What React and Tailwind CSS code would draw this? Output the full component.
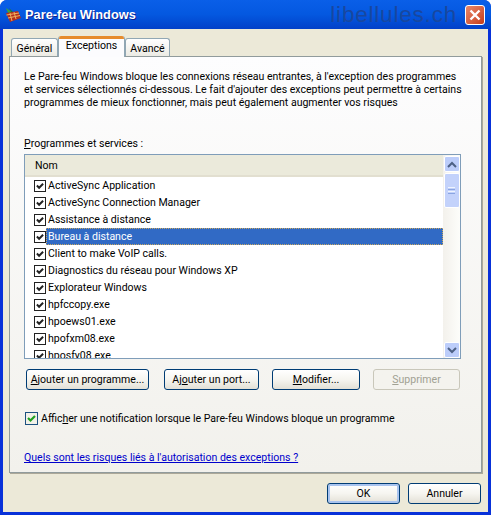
import React from 'react';

const rows = [
  'ActiveSync Application',
  'ActiveSync Connection Manager',
  'Assistance à distance',
  'Bureau à distance',
  'Client to make VoIP calls.',
  'Diagnostics du réseau pour Windows XP',
  'Explorateur Windows',
  'hpfccopy.exe',
  'hpoews01.exe',
  'hpofxm08.exe',
  'hposfy08.exe',
];

const Check = ({ className }) => (
  <svg viewBox="0 0 9 9" className={className}>
    <path d="M1 4 L3.5 6.5 L8 2" fill="none" stroke="currentColor" strokeWidth="2.2" />
  </svg>
);

const Row = ({ label, selected }) => (
  <div className="flex h-[17px] items-center pl-[9px]">
    <div className="flex h-[12px] w-[12px] shrink-0 items-center justify-center border border-[#222] bg-white text-[#222]">
      <Check className="h-[8px] w-[8px]" />
    </div>
    {selected ? (
      <div className="flex h-[17px] flex-1 items-center border border-dotted border-[#c9a860] bg-[#316ac5] pl-[1px] text-white">
        {label}
      </div>
    ) : (
      <div className="pl-[2px]">{label}</div>
    )}
  </div>
);

const Button = ({ width, children, disabled, isDefault }) => (
  <div
    className={`flex h-[21px] items-center justify-center rounded-[3px] border bg-gradient-to-b ${
      disabled
        ? 'border-[#c9c7ba] from-[#f4f3ee] to-[#f4f3ee] text-[#a1a192]'
        : 'border-[#003c74] from-white via-[#f6f5f0] to-[#e3e0d6] text-black'
    } ${isDefault ? 'shadow-[inset_0_0_0_2px_#a9c4ef]' : ''} ${width}`}
  >
    <span className="whitespace-nowrap">{children}</span>
  </div>
);

const Tab = ({ width, active, children }) =>
  active ? (
    <div className={`relative z-10 -mb-px flex h-[21px] flex-col overflow-hidden rounded-t-[3px] border-x border-[#91a7b4] bg-[#fcfcfe] ${width}`}>
      <div className="h-[3px] bg-[#e68b2c]" />
      <div className="flex flex-1 justify-center">{children}</div>
    </div>
  ) : (
    <div className={`flex h-[18px] items-center justify-center rounded-t-[3px] border border-b-0 border-[#91a7b4] bg-gradient-to-b from-white to-[#ecebe4] pt-[2px] ${width}`}>
      {children}
    </div>
  );

const Firewall = () => (
  <svg viewBox="0 0 16 16" className="h-[16px] w-[16px]">
    <path d="M1 1 L8 6 L4 8 Z" fill="#3aa83a" />
    <path d="M4 1 L9 6 L7 7 Z" fill="#1e7a2e" />
    <path d="M1 6 L13 4 L16 11 L5 15 Z" fill="#b5301c" />
    <path d="M1.5 8 L14 6 M3 11 L15 8.5 M5 6 L7 14 M9 5 L11 12" stroke="#f0b060" strokeWidth="1" fill="none" />
  </svg>
);

const ScrollButton = ({ up }) => (
  <div className="flex h-[16px] w-[16px] items-center justify-center rounded-[2px] border border-white bg-[#bccdfa]">
    <svg viewBox="0 0 10 7" className="h-[7px] w-[10px]">
      <path d={up ? 'M1 6 L5 2 L9 6' : 'M1 1 L5 5 L9 1'} fill="none" stroke="#4d6185" strokeWidth="2" />
    </svg>
  </div>
);

export default function App() {
  return (
    <div className="flex h-[515px] w-[491px] flex-col overflow-hidden rounded-t-[7px] bg-[#0831d9] font-['Roboto',sans-serif] text-[10.55px] leading-[13px] text-black">
      {/* title bar */}
      <div className="flex h-[29px] shrink-0 items-center bg-gradient-to-b from-[#0a5fe8] via-[#0458e0] to-[#0340c8] pl-[5px] pr-[6px]">
        <Firewall />
        <div className="ml-[4px] font-['Liberation_Sans',sans-serif] text-[12.8px] font-bold text-white [text-shadow:1px_1px_#0f1f8f]">Pare-feu Windows</div>
        <div className="ml-auto mr-[8px] font-['Liberation_Sans',sans-serif] text-[22.5px] tracking-[0.8px] text-[#18479f]">libellules.ch</div>
        <div className="flex h-[20px] w-[20px] items-center justify-center rounded-[3px] border border-white bg-gradient-to-br from-[#e8886a] to-[#c63a14]">
          <svg viewBox="0 0 12 12" className="h-[12px] w-[12px]">
            <path d="M1.5 1.5 L10.5 10.5 M10.5 1.5 L1.5 10.5" stroke="#fff" strokeWidth="2.4" />
          </svg>
        </div>
      </div>

      {/* dialog client area */}
      <div className="mx-[3px] mb-[3px] flex flex-1 flex-col bg-[#ece9d8] px-[6px]">
        <div className="flex h-[27px] items-end pl-[2px]">
          <Tab width="w-[47px]">Général</Tab>
          <Tab width="w-[67px]" active>Exceptions</Tab>
          <Tab width="w-[45px]">Avancé</Tab>
        </div>

        {/* tab page */}
        <div className="flex h-[417px] flex-col border border-[#919b9c] bg-gradient-to-b from-[#fdfdfe] to-[#f2f1ec] pl-[14px] pr-[18px] shadow-[1px_1px_0_#aca899]">
          <p className="mt-[13px] whitespace-nowrap">
            Le Pare-feu Windows bloque les connexions réseau entrantes, à l'exception des programmes<br />
            et services sélectionnés ci-dessous. Le fait d'ajouter des exceptions peut permettre à certains<br />
            programmes de mieux fonctionner, mais peut également augmenter vos risques
          </p>

          <div className="mt-[28px]"><span className="underline">P</span>rogrammes et services :</div>

          {/* list */}
          <div className="mt-[4px] flex h-[205px] w-[437px] border border-[#7f9db9] bg-white">
            <div className="min-w-0 flex-1 overflow-hidden">
              <div className="flex h-[22px] items-center border-b-[2px] border-[#e2dfd0] bg-[#ebeadb] pl-[10px]">Nom</div>
              {rows.map((r) => (
                <Row key={r} label={r} selected={r === 'Bureau à distance'} />
              ))}
            </div>
            <div className="flex w-[17px] shrink-0 flex-col items-center bg-gradient-to-r from-[#f3f1ec] to-[#fdfdfa] pt-px">
              <ScrollButton up />
              <div className="mt-px flex h-[35px] w-[16px] flex-col items-center justify-center gap-px rounded-[2px] border border-white bg-[#c3d2fb]">
                <div className="h-px w-[7px] bg-[#eef4fe]" />
                <div className="h-px w-[7px] bg-[#8aa5e2]" />
                <div className="h-px w-[7px] bg-[#eef4fe]" />
                <div className="h-px w-[7px] bg-[#8aa5e2]" />
              </div>
              <div className="flex-1" />
              <ScrollButton />
            </div>
          </div>

          {/* buttons */}
          <div className="mt-[10px] flex pl-[2px]">
            <Button width="w-[123px]"><span className="underline">A</span>jouter un programme...</Button>
            <div className="ml-[15px]">
              <Button width="w-[95px]">Aj<span className="underline">o</span>uter un port...</Button>
            </div>
            <div className="ml-[13px]">
              <Button width="w-[88px]"><span className="underline">M</span>odifier...</Button>
            </div>
            <div className="ml-[13px]">
              <Button width="w-[87px]" disabled><span className="underline">S</span>upprimer</Button>
            </div>
          </div>

          <div className="mt-[22px] flex items-center pl-[1px]">
            <div className="flex h-[13px] w-[13px] items-center justify-center border border-[#1c5180] bg-[#f2f1e8] text-[#21a121]">
              <Check className="h-[9px] w-[9px]" />
            </div>
            <div className="ml-[3px] whitespace-nowrap">
              Affic<span className="underline">h</span>er une notification lorsque le Pare-feu Windows bloque un programme
            </div>
          </div>

          <div className="mt-[26px] whitespace-nowrap text-[#0000cc] underline">
            Quels sont les risques liés à l'autorisation des exceptions ?
          </div>
        </div>

        {/* footer buttons */}
        <div className="mt-[10px] flex justify-end gap-[8px] pr-px">
          <Button width="w-[73px]" isDefault>OK</Button>
          <Button width="w-[73px]">Annuler</Button>
        </div>
      </div>
    </div>
  );
}
